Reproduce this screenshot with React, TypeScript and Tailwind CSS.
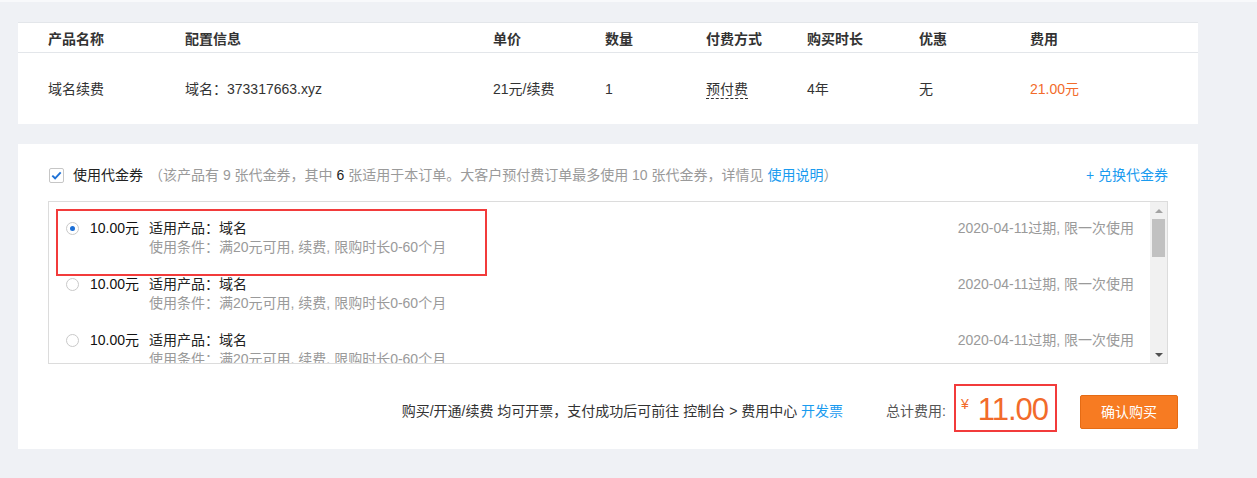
import React from "react";

function Radio({ checked }: { checked?: boolean }) {
  return (
    <div className="w-[13px] h-[13px] rounded-full border border-[#c9c9c9] bg-white flex items-center justify-center shrink-0">
      {checked && <div className="w-[5px] h-[5px] rounded-full bg-[#1c6fd6]" />}
    </div>
  );
}

function Coupon({ checked }: { checked?: boolean }) {
  return (
    <div className="h-[56px] pt-[8px] pl-[17px] pr-[33px] flex shrink-0">
      <div className="h-[19px] flex items-center">
        <Radio checked={checked} />
      </div>
      <div className="ml-[11px] w-[59px] leading-[19px] text-[#111] shrink-0">10.00元</div>
      <div className="flex-1">
        <div className="leading-[19px] text-[#222]">适用产品：域名</div>
        <div className="leading-[19px] text-[#9a9a9a]">使用条件：满20元可用, 续费, 限购时长0-60个月</div>
      </div>
      <div className="leading-[19px] text-[#9a9a9a]">2020-04-11过期, 限一次使用</div>
    </div>
  );
}

export default function App() {
  const cols = [
    { w: "w-[137px]", h: "产品名称", v: <span>域名续费</span> },
    { w: "w-[308px]", h: "配置信息", v: <span>域名：373317663.xyz</span> },
    { w: "w-[112px]", h: "单价", v: <span>21元/续费</span> },
    { w: "w-[101px]", h: "数量", v: <span>1</span> },
    {
      w: "w-[101px]",
      h: "付费方式",
      v: <span className="border-b border-dashed border-[#333] pb-[1px]">预付费</span>,
    },
    { w: "w-[112px]", h: "购买时长", v: <span>4年</span> },
    { w: "w-[111px]", h: "优惠", v: <span>无</span> },
    { w: "w-[120px]", h: "费用", v: <span className="text-[#f26b2b]">21.00元</span> },
  ];

  return (
    <div className="min-h-[478px] w-[1257px] bg-[#eff1f5] font-['Liberation_Sans','Noto_Sans_CJK_SC',sans-serif] text-[14px] text-[#333]">
      <div className="h-[2px] bg-[#f8f9fb]" />
      <div className="pt-[20px] pl-[18px]">
        {/* Order table card */}
        <div className="w-[1180px] bg-white border-t border-[#e3e6ea]">
          <div className="h-[30px] flex items-center pl-[30px] pt-[2px] border-b border-[#e3e6ea]">
            {cols.map((c) => (
              <div key={c.h} className={`${c.w} font-bold text-[#333] leading-[18px]`}>
                {c.h}
              </div>
            ))}
          </div>
          <div className="h-[71px] flex items-center pl-[30px] pt-[1px]">
            {cols.map((c) => (
              <div key={c.h} className={`${c.w} text-[#333] leading-[18px]`}>
                {c.v}
              </div>
            ))}
          </div>
        </div>

        {/* Coupon card */}
        <div className="w-[1180px] bg-white mt-[20px] pt-[21px] pb-[17px]">
          <div className="h-[20px] flex items-center px-[30px] pt-[1px]">
            <div className="ml-[1px] w-[15px] h-[15px] border border-[#c6c6c6] rounded-[2px] flex items-center justify-center bg-white">
              <svg width="11" height="9" viewBox="0 0 11 9">
                <path d="M1.3 4.6 L4.1 7.3 L9.7 1.3" fill="none" stroke="#1f72d6" strokeWidth="1.9" />
              </svg>
            </div>
            <span className="ml-[9px] text-[#222]">使用代金券</span>
            <span className="ml-[6px] text-[#9a9a9a]">
              （该产品有 9 张代金券，其中 <span className="text-[#222]">6</span> 张适用于本订单。大客户预付费订单最多使用 10 张代金券，详情见{" "}
              <span className="text-[#1a9bef]">使用说明</span>）
            </span>
            <span className="ml-auto text-[#1a9bef]">+ 兑换代金券</span>
          </div>

          <div className="mx-[30px] mt-[16px] h-[163px] border border-[#dcdcdc] relative overflow-hidden">
            <div className="pt-[9px] flex flex-col">
              <Coupon checked />
              <Coupon />
              <Coupon />
            </div>
            {/* annotation */}
            <div className="absolute left-[7px] top-[7px] w-[431px] h-[67px] border-2 border-[#f23b3b]" />
            {/* scrollbar */}
            <div className="absolute right-0 top-0 bottom-0 w-[17px] bg-[#f1f1f1] flex flex-col items-center">
              <div className="h-[17px] flex items-center justify-center">
                <div className="w-0 h-0 border-l-[4px] border-r-[4px] border-b-[4px] border-l-transparent border-r-transparent border-b-[#a3a3a3]" />
              </div>
              <div className="w-[13px] h-[38px] bg-[#c1c1c1]" />
              <div className="flex-1" />
              <div className="h-[17px] flex items-center justify-center">
                <div className="w-0 h-0 border-l-[4px] border-r-[4px] border-t-[4px] border-l-transparent border-r-transparent border-t-[#505050]" />
              </div>
            </div>
          </div>

          <div className="mt-[20px] h-[48px] flex items-center justify-end pr-[20px]">
            <span className="mt-[6px] text-[#333]">
              购买/开通/续费 均可开票，支付成功后可前往 控制台 &gt; 费用中心 <span className="text-[#1a9bef]">开发票</span>
            </span>
            <span className="mt-[6px] ml-[43px] text-[#555]">总计费用:</span>
            <div className="ml-[8px] h-[48px] w-[103px] border-2 border-[#f23b3b] flex items-start pl-[5px] pt-[10px]">
              <span className="text-[#f26b2b] text-[14px] leading-[16px]">¥</span>
              <span className="ml-[9px] text-[#f26b2b] text-[31px] leading-[28px] tracking-[-1px]">11.00</span>
            </div>
            <button className="mt-[8px] ml-[23px] w-[98px] h-[34px] bg-[#f77b22] border border-[#e56b14] rounded-[2px] text-white text-[14px]">
              确认购买
            </button>
          </div>
        </div>
      </div>
    </div>
  );
}
